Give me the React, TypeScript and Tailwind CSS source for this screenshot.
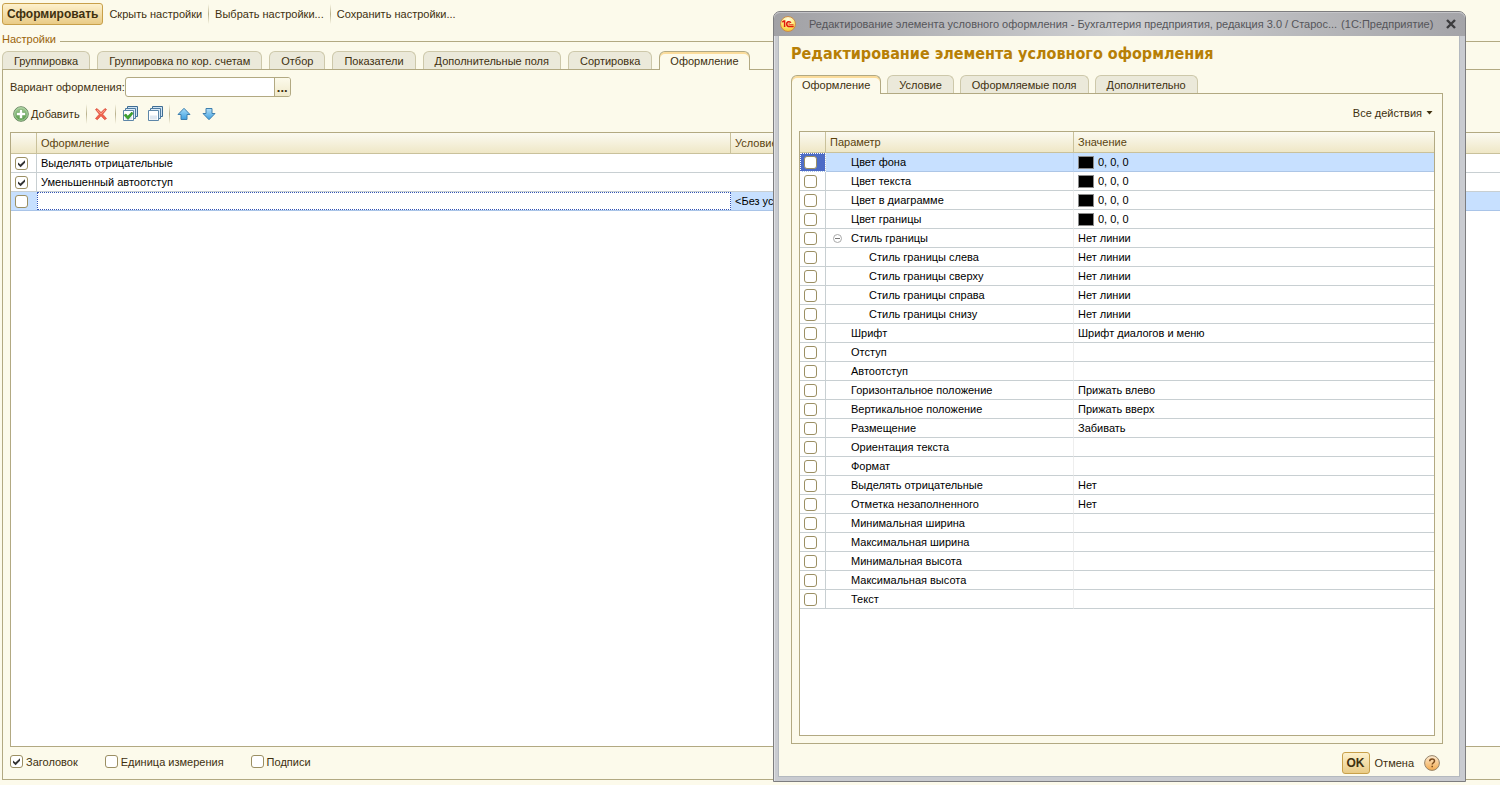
import type { InputHTMLAttributes, ReactNode } from "react";
import { clsx } from "clsx";

interface Param {
  name: string;
  value?: string;
  color?: boolean;
  child?: boolean;
  expanded?: boolean;
}

const MAIN_TABS = [
  "Группировка",
  "Группировка по кор. счетам",
  "Отбор",
  "Показатели",
  "Дополнительные поля",
  "Сортировка",
  "Оформление",
];

const DIALOG_TABS = ["Оформление", "Условие", "Оформляемые поля", "Дополнительно"];

const PARAMS: Param[] = [
  { name: "Цвет фона", value: "0, 0, 0", color: true },
  { name: "Цвет текста", value: "0, 0, 0", color: true },
  { name: "Цвет в диаграмме", value: "0, 0, 0", color: true },
  { name: "Цвет границы", value: "0, 0, 0", color: true },
  { name: "Стиль границы", value: "Нет линии", expanded: true },
  { name: "Стиль границы слева", value: "Нет линии", child: true },
  { name: "Стиль границы сверху", value: "Нет линии", child: true },
  { name: "Стиль границы справа", value: "Нет линии", child: true },
  { name: "Стиль границы снизу", value: "Нет линии", child: true },
  { name: "Шрифт", value: "Шрифт диалогов и меню" },
  { name: "Отступ" },
  { name: "Автоотступ" },
  { name: "Горизонтальное положение", value: "Прижать влево" },
  { name: "Вертикальное положение", value: "Прижать вверх" },
  { name: "Размещение", value: "Забивать" },
  { name: "Ориентация текста" },
  { name: "Формат" },
  { name: "Выделять отрицательные", value: "Нет" },
  { name: "Отметка незаполненного", value: "Нет" },
  { name: "Минимальная ширина" },
  { name: "Максимальная ширина" },
  { name: "Минимальная высота" },
  { name: "Максимальная высота" },
  { name: "Текст" },
];

function Checkbox(props: InputHTMLAttributes<HTMLInputElement>) {
  return (
    <span className="inline-grid size-[13px] shrink-0">
      <input
        type="checkbox"
        className="peer col-start-1 row-start-1 size-[13px] appearance-none rounded-[3px] border border-[#9b8f63] bg-white"
        {...props}
      />
      <svg
        viewBox="0 0 13 13"
        className="pointer-events-none invisible col-start-1 row-start-1 size-[13px] peer-checked:visible"
        aria-hidden="true"
      >
        <path d="M3 5.6 L5.4 7.6 L10 3.2 L10 5.8 L5.6 10.2 L3 7.8 Z" fill="#333" />
      </svg>
    </span>
  );
}

function Tabs({ items, active, className }: { items: string[]; active: string; className: string }) {
  return (
    <div role="tablist" className={clsx("relative z-10 -mb-px flex h-[19px] items-start", className)}>
      {items.map((item) => (
        <button
          key={item}
          type="button"
          role="tab"
          aria-selected={item === active}
          className={clsx(
            "shrink-0 rounded-t-[6px] border border-b-0 whitespace-nowrap text-[#40300f]",
            item === active
              ? "h-[19px] border-[#b2a982] bg-[#fcfaeb] px-[10px] shadow-[inset_0_2px_0_#fbdc9b]"
              : "h-[18px] border-[#cdc8aa] bg-[#ebe9da] px-[11px]",
          )}
        >
          {item}
        </button>
      ))}
    </div>
  );
}

function Divider() {
  return (
    <span className="h-5 w-px shrink-0 bg-linear-to-b from-[#fcfaeb] via-[#b9b18c] to-[#fcfaeb]" />
  );
}

function PrimaryButton({ children }: { children: ReactNode }) {
  return (
    <button
      type="button"
      className="h-[22px] rounded-[3px] border border-[#c8a04a] bg-linear-to-b from-[#fdf1cd] to-[#e9cb86] px-1 text-[12px] font-bold text-[#40300f]"
    >
      {children}
    </button>
  );
}

function HeaderCell({ children, label }: { children?: ReactNode; label?: string }) {
  return (
    <th
      scope="col"
      aria-label={label}
      className="h-[21px] border-r border-b border-[#c9c19b] bg-linear-to-b from-[#fbfaf1] to-[#efe7c6] px-1 text-left font-normal text-[#5a430f] last:border-r-0"
    >
      {children}
    </th>
  );
}

function AddIcon() {
  return (
    <svg viewBox="0 0 16 16" className="size-4" aria-hidden="true">
      <defs>
        <linearGradient id="add" x1="0" y1="0" x2="0" y2="1">
          <stop offset="0" stopColor="#a9cf9b" />
          <stop offset="1" stopColor="#4f9440" />
        </linearGradient>
      </defs>
      <circle cx="8" cy="8" r="7.3" fill="url(#add)" stroke="#6f8a68" />
      <circle cx="8" cy="8" r="6.3" fill="none" stroke="#b8dcae" strokeWidth=".8" />
      <path d="M6.5 3.5h3v3h3v3h-3v3h-3v-3h-3v-3h3z" fill="#fff" stroke="#5f9a50" strokeWidth=".5" />
    </svg>
  );
}

function DeleteIcon() {
  return (
    <svg viewBox="0 0 16 16" className="size-4" aria-hidden="true">
      <path
        d="M2.5 3.5 4 2.5l4 4 4-4 1.5 1-3.8 4.7 3.8 4.3-1.8 1.2L8 9.8l-3.7 3.9-1.8-1.2 3.8-4.3z"
        fill="#f0634d"
        stroke="#d9493a"
        strokeWidth=".7"
      />
      <path d="m4 4 4 4 4-4" fill="none" stroke="#fa9a83" />
    </svg>
  );
}

function PagesIcon({ checked }: { checked?: boolean }) {
  return (
    <svg viewBox="0 0 16 16" className="size-4" aria-hidden="true">
      <path d="M5.5 .5h10v10h-10z" fill="#cfe3f3" stroke="#3f6d93" />
      <path d="M3.500 2.500h10v10h-10z" fill="#dcebf7" stroke="#4d7ba1" />
      <path d="M1.500 4.500h10v10h-10z" fill="#fff" stroke="#5d86a8" />
      <path d="M3 9.500h7v4h-7z" fill="#dfe7f0" />
      {checked && (
        <path d="M2 9.300 4 8l1.700 2.200L9.800 6l1.200 1.600-5 5.900z" fill="#3da62a" stroke="#23801a" strokeWidth=".6" />
      )}
    </svg>
  );
}

function ArrowIcon({ down }: { down?: boolean }) {
  return (
    <svg viewBox="0 0 16 16" className={clsx("size-4", down && "rotate-180")} aria-hidden="true">
      <defs>
        <linearGradient id={down ? "arrow-down" : "arrow-up"} x1="0" y1="0" x2="0" y2="1">
          <stop offset="0" stopColor={down ? "#3d9fe0" : "#a5dcf8"} />
          <stop offset="1" stopColor={down ? "#b5e0f8" : "#3d9fe0"} />
        </linearGradient>
      </defs>
      <path
        d="M8 2.3 14 8.5h-3v5H5v-5H2z"
        fill={down ? "url(#arrow-down)" : "url(#arrow-up)"}
        stroke="#3e7fae"
        strokeLinejoin="round"
      />
    </svg>
  );
}

function LogoIcon() {
  return (
    <svg viewBox="0 0 16 16" className="size-4 shrink-0" aria-hidden="true">
      <defs>
        <radialGradient id="logo" cx=".5" cy=".2" r=".8">
          <stop offset="0" stopColor="#fffce6" />
          <stop offset=".5" stopColor="#ffee83" />
          <stop offset="1" stopColor="#f5c52c" />
        </radialGradient>
      </defs>
      <circle cx="8" cy="8" r="7.5" fill="url(#logo)" stroke="#c98b4f" />
      <path d="M2.3 6.2 4 5h.6v6" fill="none" stroke="#e0190f" strokeWidth="1.5" />
      <path d="M10.8 6.9C10.400 5.300 6.700 5 6.700 8c0 2 1.600 2.600 3 2.600h4" fill="none" stroke="#e0190f" strokeWidth="1.500" />
      <path d="M9.500 7.400c-1-.3-1.300 1.200 0 1.300h4" fill="none" stroke="#e0190f" strokeWidth=".8" />
    </svg>
  );
}

function MainForm() {
  return (
    <main className="flex min-h-screen flex-col pb-[5px]">
      <div className="flex h-7 items-center gap-[6px] pl-[2px]">
        <PrimaryButton>Сформировать</PrimaryButton>
        <button type="button">Скрыть настройки</button>
        <Divider />
        <button type="button">Выбрать настройки...</button>
        <Divider />
        <button type="button">Сохранить настройки...</button>
      </div>
      <div className="flex h-[23px] items-center gap-1 pb-[2px] pl-[2px]">
        <h2 className="text-[#9a640a]">Настройки</h2>
        <span className="mt-[6px] h-px flex-1 bg-[#b2a982]" />
      </div>
      <div className="flex flex-1 flex-col pl-[2px]">
        <Tabs items={MAIN_TABS} active="Оформление" className="gap-[7px]" />
        <section className="flex flex-1 flex-col border-y border-l border-[#b2a982] pl-[7px]">
          <div className="mt-[7px] flex items-center">
            <label htmlFor="variant">Вариант оформления:</label>
            <span className="flex h-5 w-[166px] overflow-hidden rounded-[3px] border border-[#b2a982] bg-white">
              <input id="variant" type="text" className="min-w-0 flex-1 px-1 outline-none" />
              <button
                type="button"
                aria-label="Выбрать"
                className="flex w-4 items-end justify-center border-l border-[#b2a982] bg-linear-to-b from-[#fcfaeb] to-[#f0e9cb] text-[13px] leading-[17px] font-bold"
              >
                ...
              </button>
            </span>
          </div>
          <div className="mt-[7px] flex h-5 items-center gap-[6px] pl-[3px]">
            <button type="button" className="flex items-center gap-[2px]">
              <AddIcon />
              Добавить
            </button>
            <Divider />
            <button type="button" aria-label="Удалить">
              <DeleteIcon />
            </button>
            <Divider />
            <button type="button" aria-label="Установить флажки" className="mr-[3px]">
              <PagesIcon checked />
            </button>
            <button type="button" aria-label="Снять флажки">
              <PagesIcon />
            </button>
            <Divider />
            <button type="button" aria-label="Вверх" className="mr-[3px]">
              <ArrowIcon />
            </button>
            <button type="button" aria-label="Вниз">
              <ArrowIcon down />
            </button>
          </div>
          <div className="mt-2 flex-1 border-y border-l border-[#b2a982] bg-white">
            <table className="w-full table-fixed border-separate border-spacing-0 text-black">
              <colgroup>
                <col className="w-[26px]" />
                <col className="w-[694px]" />
                <col />
              </colgroup>
              <thead>
                <tr>
                  <HeaderCell label="Использование" />
                  <HeaderCell>Оформление</HeaderCell>
                  <HeaderCell>Условие</HeaderCell>
                </tr>
              </thead>
              <tbody>
                {["Выделять отрицательные", "Уменьшенный автоотступ"].map((name) => (
                  <tr key={name} className="h-[19px]">
                    <td className="border-r border-b border-[#c8cfd2] px-1">
                      <div className="flex">
                        <Checkbox defaultChecked aria-label={name} />
                      </div>
                    </td>
                    <td className="border-b border-[#c8cfd2] px-1">{name}</td>
                    <td className="border-b border-[#c8cfd2]" />
                  </tr>
                ))}
                <tr className="h-[19px] bg-[#c7e0ff]">
                  <td className="border-b border-[#a9c4e8] px-1">
                    <div className="flex">
                      <Checkbox aria-label="Новый элемент" />
                    </div>
                  </td>
                  <td className="border-b border-[#a9c4e8]">
                    <input
                      type="text"
                      aria-label="Оформление"
                      className="block h-[18px] w-full border border-dotted border-[#3355b5] bg-white px-1 outline-none"
                    />
                  </td>
                  <td className="border-b border-[#a9c4e8] px-1">&lt;Без условия&gt;</td>
                </tr>
              </tbody>
            </table>
          </div>
          <div className="flex h-8 items-center gap-[27px] pb-[3px]">
            <label className="flex items-center gap-[3px]">
              <Checkbox defaultChecked />
              Заголовок
            </label>
            <label className="flex items-center gap-[3px]">
              <Checkbox />
              Единица измерения
            </label>
            <label className="flex items-center gap-[3px]">
              <Checkbox />
              Подписи
            </label>
          </div>
        </section>
      </div>
    </main>
  );
}

function ParamRow({ param, selected }: { param: Param; selected: boolean }) {
  const line = selected ? "border-b-[#adc6e6]" : "border-b-[#c8cfd2]";
  return (
    <tr className={clsx("h-[19px]", selected && "bg-[#c7e0ff]")}>
      <td
        className={clsx(
          "border-r border-b border-r-[#c8cfd2] px-1",
          line,
          selected && "bg-[#4d6bc6] outline outline-1 -outline-offset-1 outline-dotted outline-white",
        )}
      >
        <div className="flex">
          <Checkbox aria-label={param.name} />
        </div>
      </td>
      <td className={clsx("border-r border-b", line, selected ? "border-r-[#bcd5f4]" : "border-r-[#eeeeee]")}>
        <div className={clsx("flex items-center", param.expanded ? "pl-[7px]" : param.child ? "pl-[43px]" : "pl-[25px]")}>
          {param.expanded && (
            <button type="button" aria-label="Свернуть" className="mr-[9px]">
              <svg viewBox="0 0 9 9" className="size-[9px]" aria-hidden="true">
                <circle cx="4.5" cy="4.5" r="4" fill="#fff" stroke="#a8a8a8" />
                <path d="M2 4.5h5" stroke="#777" />
              </svg>
            </button>
          )}
          {param.name}
        </div>
      </td>
      <td className={clsx("border-b px-1", line)}>
        <div className="flex items-center gap-1">
          {param.color && <span className="h-[13px] w-4 border border-[#8c8c8c] bg-black" />}
          {param.value}
        </div>
      </td>
    </tr>
  );
}

function EditDialog() {
  return (
    <div
      role="dialog"
      aria-labelledby="dialog-title"
      className="absolute top-[11px] right-[34px] bottom-[3px] z-20 flex w-[693px] flex-col rounded-t-[7px] border border-[#7d7d7f] bg-[#c9cbd0] pr-[5px] pb-[4px] pl-1 shadow-[inset_1px_0_0_#dfe0e3]"
    >
      <div className="-mr-[5px] -ml-1 flex h-6 shrink-0 items-center rounded-t-[6px] bg-linear-to-r from-[#a1a1a5] via-[#cfd0d2] to-[#a4a4a8] pr-[8px] pl-[6px] shadow-[inset_0_1px_0_#c4c4c8]">
        <LogoIcon />
        <span className="ml-[13px] flex min-w-0 flex-1 gap-1 whitespace-nowrap text-[#55555a]">
          <span>
            Редактирование элемента условного оформления - Бухгалтерия предприятия, редакция 3.0 / Старос...
          </span>
          <span>(1С:Предприятие)</span>
        </span>
        <button type="button" aria-label="Закрыть" className="ml-2">
          <svg viewBox="0 0 12 12" className="size-3" aria-hidden="true">
            <path d="m2 2 8 8M10 2l-8 8" stroke="#3c3c3e" strokeWidth="2.4" />
          </svg>
        </button>
      </div>
      <div className="flex flex-1 flex-col border border-t-0 border-[#b4b9bf] bg-[#fcfaeb] pr-4 pl-3">
        <h1
          id="dialog-title"
          className="mt-[6px] h-[33px] font-['DejaVu_Sans_Condensed','DejaVu_Sans',sans-serif] text-[16px] leading-6 font-bold whitespace-nowrap text-[#b77f06]"
        >
          Редактирование элемента условного оформления
        </h1>
        <Tabs items={DIALOG_TABS} active="Оформление" className="gap-[6px]" />
        <section className="flex flex-1 flex-col border border-[#b2a982] px-[7px] pb-[7px]">
          <button type="button" className="mt-[9px] mr-[2px] flex h-5 items-center gap-1 self-end">
            Все действия
            <svg viewBox="0 0 7 4" className="h-1 w-[7px]" aria-hidden="true">
              <path d="M.5 0h6L3.500 3.500z" fill="#40300f" />
            </svg>
          </button>
          <div className="mt-2 flex-1 border border-[#b2a982] bg-white">
            <table className="w-full table-fixed border-separate border-spacing-0 text-black">
              <colgroup>
                <col className="w-[26px]" />
                <col className="w-[248px]" />
                <col />
              </colgroup>
              <thead>
                <tr>
                  <HeaderCell label="Использование" />
                  <HeaderCell>Параметр</HeaderCell>
                  <HeaderCell>Значение</HeaderCell>
                </tr>
              </thead>
              <tbody>
                {PARAMS.map((param, index) => (
                  <ParamRow key={param.name} param={param} selected={index === 0} />
                ))}
              </tbody>
            </table>
          </div>
        </section>
        <div className="flex h-8 items-end justify-end gap-[5px] pr-[3px] pb-[2px]">
          <PrimaryButton>OK</PrimaryButton>
          <button type="button" className="h-[22px]">
            Отмена
          </button>
          <button type="button" aria-label="Справка" className="mb-[3px] ml-[5px]">
            <svg viewBox="0 0 16 16" className="size-4" aria-hidden="true">
              <defs>
                <linearGradient id="help" x1="0" y1="0" x2="0" y2="1">
                  <stop offset="0" stopColor="#fdebd2" />
                  <stop offset="1" stopColor="#f3a94c" />
                </linearGradient>
              </defs>
              <circle cx="8" cy="8" r="7.400" fill="url(#help)" stroke="#96846a" />
              <path
                d="M5.700 6.200c0-3 4.800-2.900 4.800-.2 0 1.700-2.300 1.800-2.300 3.600M8.200 10.800v1.500"
                fill="none"
                stroke="#7a4a1c"
                strokeWidth="1.500"
              />
            </svg>
          </button>
        </div>
      </div>
    </div>
  );
}

export default function App() {
  return (
    <div className="relative min-h-screen overflow-hidden bg-[#fcfaeb] font-['Liberation_Sans',Arial,sans-serif] text-[11px] leading-[14px] text-[#40300f]">
      <MainForm />
      <EditDialog />
    </div>
  );
}
